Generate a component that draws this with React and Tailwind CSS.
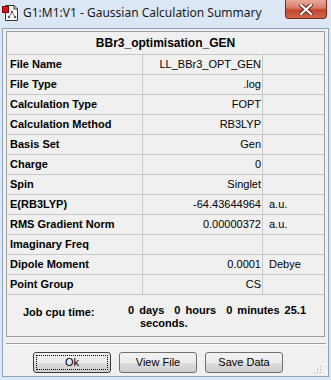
import React from "react";

const rows = [
  ["File Name", "LL_BBr3_OPT_GEN", ""],
  ["File Type", ".log", ""],
  ["Calculation Type", "FOPT", ""],
  ["Calculation Method", "RB3LYP", ""],
  ["Basis Set", "Gen", ""],
  ["Charge", "0", ""],
  ["Spin", "Singlet", ""],
  ["E(RB3LYP)", "-64.43644964", "a.u."],
  ["RMS Gradient Norm", "0.00000372", "a.u."],
  ["Imaginary Freq", "", ""],
  ["Dipole Moment", "0.0001", "Debye"],
  ["Point Group", "CS", ""],
];

function AppIcon() {
  return (
    <svg width="18" height="18" viewBox="0 0 18 18">
      <path d="M3.5 1.5 H12 L15.5 5 V16.5 H3.5 Z" fill="#fff" stroke="#333" />
      <path d="M12 1.5 V5 H15.5" fill="none" stroke="#333" />
      <rect x="0.5" y="2.5" width="6" height="6" fill="#e01010" stroke="#700" />
      <circle cx="10" cy="8" r="1.3" fill="#555" />
      <circle cx="7" cy="13" r="1.3" fill="#555" />
      <circle cx="13" cy="13" r="1.3" fill="#555" />
      <path d="M10 8 L7 13 M10 8 L13 13" stroke="#777" strokeWidth="1" />
    </svg>
  );
}

function Btn({ children, focused }) {
  return (
    <div
      className={
        "w-[78px] h-[21px] rounded-[3px] border flex items-center justify-center relative " +
        (focused ? "border-[#3c3c3c]" : "border-[#707070]")
      }
      style={{ background: "linear-gradient(#f2f2f2 0%, #ebebeb 50%, #dddddd 51%, #cfcfcf 100%)" }}
    >
      {focused && (
        <div className="absolute inset-[2px] border border-dotted border-black"></div>
      )}
      <span className="text-[11px] text-black" style={{ fontFamily: '"Liberation Sans", Arial, sans-serif' }}>
        {children}
      </span>
    </div>
  );
}

export default function App() {
  const sans = { fontFamily: '"Liberation Sans", Arial, sans-serif' };
  return (
    <div className="w-[331px] h-[380px] bg-[#dbe7f5] flex flex-col overflow-hidden relative">
      {/* title bar */}
      <div className="h-[28px] flex items-start relative">
        <div className="mt-[4px] ml-[2px]">
          <AppIcon />
        </div>
        <div
          className="ml-[3px] mt-[6px] text-[12px] leading-[14px] text-[#1a1a1a]"
          style={{ fontFamily: '"Noto Sans", "Open Sans", sans-serif' }}
        >
          G1:M1:V1 - Gaussian Calculation Summary
        </div>
        <div
          className="absolute left-[285px] top-0 w-[42px] h-[19px] rounded-b-[4px] border border-t-0 border-[#7a2a1c] flex items-center justify-center"
          style={{ background: "linear-gradient(#e9a89a 0%, #d97a66 45%, #c4452e 55%, #d0654a 100%)" }}
        >
          <svg width="14" height="11" viewBox="0 0 14 11">
            <path d="M2 1 L12 10 M12 1 L2 10" stroke="#5a2418" strokeWidth="4" strokeLinecap="square" />
            <path d="M2 1 L12 10 M12 1 L2 10" stroke="#ffffff" strokeWidth="2.2" strokeLinecap="square" />
          </svg>
        </div>
      </div>
      {/* client area */}
      <div className="mx-[2px] mb-[3px] flex-1 bg-[#f0f0f0] border border-[#8ea2b8] flex flex-col">
        <div className="ml-[3px] mt-[2px] w-[319px] border border-[#a0a0a0] flex flex-col" style={sans}>
          <div className="h-[22px] flex items-center justify-center text-[12px] font-bold text-black">
            BBr3_optimisation_GEN
          </div>
          {rows.map(([label, value, unit]) => (
            <div key={label} className="h-[20px] border-t border-[#c8c8c8] flex text-[11px] text-black">
              <div className="w-[136px] border-r border-[#c8c8c8] pl-[3px] flex items-center font-bold">
                {label}
              </div>
              <div className="w-[120px] border-r border-[#c8c8c8] pr-[1px] flex items-center justify-end">
                {value}
              </div>
              <div className="flex-1 pl-[6px] flex items-center">{unit}</div>
            </div>
          ))}
          <div className="h-[42px] border-t border-[#c8c8c8] flex text-[11px] font-bold text-black">
            <div className="pl-[16px] pt-[9px] w-[121px]">Job cpu time:</div>
            <div className="flex flex-col pt-[9px] leading-[13px]">
              <div className="whitespace-pre [word-spacing:2px]">0 days  0 hours  0 minutes 25.1</div>
              <div className="pl-[12px]">seconds.</div>
            </div>
          </div>
        </div>
        <div className="ml-[3px] mt-[6px] w-[320px] border-t border-[#a0a0a0] border-b border-b-white h-[2px]"></div>
        <div className="flex pl-[30px] gap-[8px] mt-[7px]">
          <Btn focused>Ok</Btn>
          <Btn>View File</Btn>
          <Btn>Save Data</Btn>
        </div>
        <div className="flex-1 relative">
          <svg className="absolute right-[6px] bottom-[2px]" width="10" height="10" viewBox="0 0 10 10">
            {[[8, 2], [5, 5], [8, 5], [2, 8], [5, 8], [8, 8]].map(([x, y], i) => (
              <rect key={i} x={x} y={y} width="1" height="1" fill="#a0a0a0" />
            ))}
          </svg>
        </div>
      </div>
    </div>
  );
}
